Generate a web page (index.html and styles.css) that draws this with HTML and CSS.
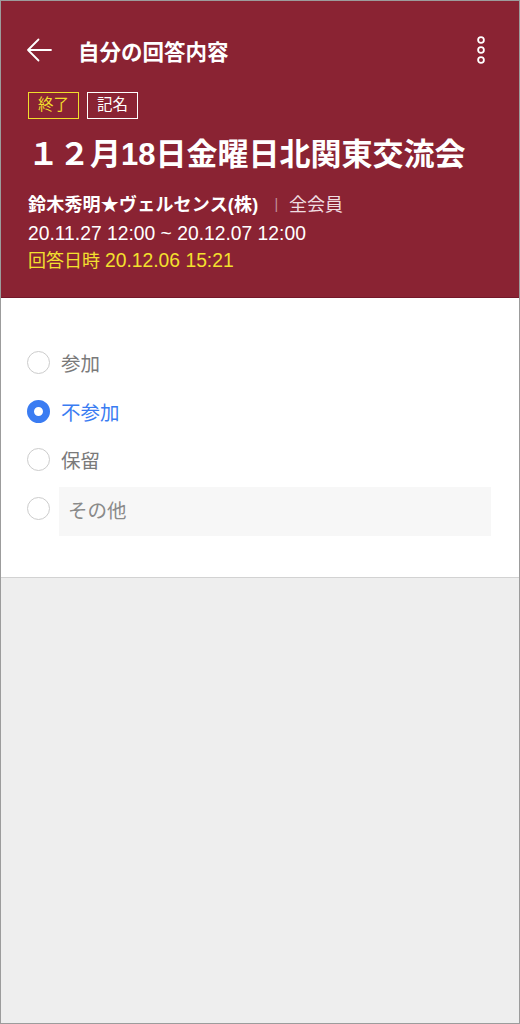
FILE: index.html
```html
<!DOCTYPE html>
<html lang="ja">
<head>
  <meta charset="UTF-8" />
  <meta name="viewport" content="width=device-width, initial-scale=1.0" />
  <title>自分の回答内容</title>
  <link rel="stylesheet" href="styles.css">
</head>
<body>
  <div class="screen">
    <div class="header">
      <div class="appbar">
        <svg class="back" width="26" height="24" viewBox="0 0 26 24">
          <path d="M25 12 H2 M12.5 1.5 L2 12 L12.5 22.5" fill="none" stroke="#fff" stroke-width="1.8" stroke-linecap="round" stroke-linejoin="round"/>
        </svg>
        <span class="appbar-title">自分の回答内容</span>
        <svg class="more" width="12" height="30" viewBox="0 0 12 30">
          <circle cx="6" cy="5" r="2.9" fill="none" stroke="#fff" stroke-width="1.8"/>
          <circle cx="6" cy="15" r="2.9" fill="none" stroke="#fff" stroke-width="1.8"/>
          <circle cx="6" cy="25" r="2.9" fill="none" stroke="#fff" stroke-width="1.8"/>
        </svg>
      </div>

      <div class="tags">
        <span class="tag tag-end">終了</span>
        <span class="tag">記名</span>
      </div>

      <h1 class="event-title">１２月18日金曜日北関東交流会</h1>

      <div class="meta">
        <p class="author"><strong>鈴木秀明★ヴェルセンス(株)</strong><span class="sep">|</span><span class="target">全会員</span></p>
        <p class="num">20.11.27 12:00 ~ 20.12.07 12:00</p>
        <p class="answered">回答日時 <span class="num">20.12.06 15:21</span></p>
      </div>
    </div>

    <div class="options">
      <div class="option">
        <span class="radio"></span>
        <span class="label">参加</span>
      </div>
      <div class="option selected">
        <span class="radio"></span>
        <span class="label">不参加</span>
      </div>
      <div class="option">
        <span class="radio"></span>
        <span class="label">保留</span>
      </div>
      <div class="option option-other">
        <span class="radio"></span>
        <input class="other-input" type="text" placeholder="その他" />
      </div>
    </div>
  </div>
</body>
</html>
```

FILE: styles.css
```css
html, body {
  margin: 0;
  padding: 0;
}
body {
  font-family: "Liberation Sans", "Noto Sans CJK JP", sans-serif;
  background: #fff;
}
.screen {
  box-sizing: border-box;
  width: 520px;
  height: 1024px;
  border: 1px solid #9c9c9c;
  background: #eeeeee;
  overflow: hidden;
}
.header {
  background: #8a2333;
  color: #fff;
  padding: 0 27px 21px;
  border-bottom: 1px solid #74182a;
}
.appbar {
  display: flex;
  align-items: center;
  height: 44px;
  padding-top: 27px;
}
.back {
  display: block;
  margin-left: -2px;
}
.appbar-title {
  margin-left: 26px;
  font-size: 21.5px;
  font-weight: bold;
  flex: 1;
}
.more {
  display: block;
  margin-right: 5px;
}
.tags {
  display: flex;
  gap: 8px;
  margin-top: 20px;
}
.tag {
  box-sizing: border-box;
  height: 27px;
  padding: 0 9px;
  border: 1.5px solid #fff;
  font-size: 15.5px;
  line-height: 24px;
}
.tag-end {
  border-color: #f1de2c;
  color: #f1de2c;
}
.event-title {
  margin: 16px 0 0;
  font-size: 31px;
  line-height: 40px;
  font-weight: bold;
}
.meta {
  margin-top: 16px;
  font-size: 18px;
}
.meta p {
  margin: 0;
  line-height: 27.5px;
}
.meta .num {
  font-size: 19.3px;
}
.author strong {
  font-weight: bold;
  letter-spacing: 0.2px;
}
.sep {
  color: #c3939b;
  font-size: 14px;
  margin: 0 11px 0 16px;
  vertical-align: 2px;
}
.target {
  color: #f0dde0;
}
.answered {
  color: #f3e02e;
}
.options {
  background: #fff;
  padding: 41px 28px 41px 26px;
  border-bottom: 1px solid #d2d2d2;
}
.option {
  display: flex;
  align-items: center;
  height: 48.5px;
}
.radio {
  box-sizing: border-box;
  width: 23px;
  height: 23px;
  border: 1.5px solid #cccccc;
  border-radius: 50%;
  flex: none;
}
.label {
  margin-left: 11px;
  font-size: 19.5px;
  color: #7a7a7a;
}
.selected .radio {
  border: 7.5px solid #3a7cf2;
  background: #fff;
}
.selected .label {
  color: #3a7cf2;
}
.option-other {
  align-items: flex-start;
  height: auto;
  margin-top: 3px;
}
.option-other .radio {
  margin-top: 10px;
}
.other-input {
  box-sizing: border-box;
  margin-left: 9px;
  flex: 1;
  height: 49px;
  border: none;
  background: #f7f7f7;
  padding: 0 9px;
  font-family: inherit;
  font-size: 19.5px;
  color: #7a7a7a;
  outline: none;
}
.other-input::placeholder {
  color: #8a8a8a;
}
```
